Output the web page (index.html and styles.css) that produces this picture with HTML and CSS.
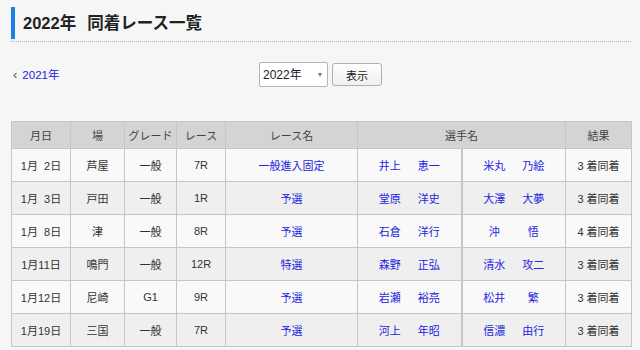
FILE: index.html
```html
<!DOCTYPE html>
<html lang="ja">
  <head>
    <meta charset="UTF-8" />
    <meta name="viewport" content="width=device-width, initial-scale=1.0" />
    <title>2022年 同着レース一覧</title>
    <link rel="stylesheet" href="styles.css">
  </head>
  <body>
    <div class="page">
      <div class="title-wrap">
        <h1>2022年<span class="sub">同着レース一覧</span></h1>
      </div>

      <div class="toolbar">
        <a class="prev" href="#"><span class="chev">&lsaquo;</span>2021年</a>
        <form class="year-form">
          <span class="select-wrap">
            <select name="year">
              <option>2022年</option>
              <option>2021年</option>
              <option>2020年</option>
            </select>
          </span>
          <button type="button">表示</button>
        </form>
        <div></div>
      </div>

      <table class="results">
        <colgroup>
          <col style="width:59px">
          <col style="width:54px">
          <col style="width:52px">
          <col style="width:49px">
          <col style="width:132px">
          <col style="width:104px">
          <col style="width:104px">
          <col style="width:66px">
        </colgroup>
        <thead>
          <tr>
            <th>月日</th>
            <th>場</th>
            <th>グレード</th>
            <th>レース</th>
            <th>レース名</th>
            <th colspan="2">選手名</th>
            <th>結果</th>
          </tr>
        </thead>
        <tbody>
          <tr>
            <td>1月&nbsp;&nbsp;2日</td><td>芦屋</td><td>一般</td><td>7R</td>
            <td><a href="#">一般進入固定</a></td>
            <td class="name"><a href="#"><span>井上</span><span>恵一</span></a></td>
            <td class="name second"><a href="#"><span>米丸</span><span>乃絵</span></a></td>
            <td>3 着同着</td>
          </tr>
          <tr>
            <td>1月&nbsp;&nbsp;3日</td><td>戸田</td><td>一般</td><td>1R</td>
            <td><a href="#">予選</a></td>
            <td class="name"><a href="#"><span>堂原</span><span>洋史</span></a></td>
            <td class="name second"><a href="#"><span>大澤</span><span>大夢</span></a></td>
            <td>3 着同着</td>
          </tr>
          <tr>
            <td>1月&nbsp;&nbsp;8日</td><td>津</td><td>一般</td><td>8R</td>
            <td><a href="#">予選</a></td>
            <td class="name"><a href="#"><span>石倉</span><span>洋行</span></a></td>
            <td class="name second"><a href="#"><span>沖</span><span>悟</span></a></td>
            <td>4 着同着</td>
          </tr>
          <tr>
            <td>1月11日</td><td>鳴門</td><td>一般</td><td>12R</td>
            <td><a href="#">特選</a></td>
            <td class="name"><a href="#"><span>森野</span><span>正弘</span></a></td>
            <td class="name second"><a href="#"><span>清水</span><span>攻二</span></a></td>
            <td>3 着同着</td>
          </tr>
          <tr>
            <td>1月12日</td><td>尼崎</td><td>G1</td><td>9R</td>
            <td><a href="#">予選</a></td>
            <td class="name"><a href="#"><span>岩瀬</span><span>裕亮</span></a></td>
            <td class="name second"><a href="#"><span>松井</span><span>繁</span></a></td>
            <td>3 着同着</td>
          </tr>
          <tr>
            <td>1月19日</td><td>三国</td><td>一般</td><td>7R</td>
            <td><a href="#">予選</a></td>
            <td class="name"><a href="#"><span>河上</span><span>年昭</span></a></td>
            <td class="name second"><a href="#"><span>信濃</span><span>由行</span></a></td>
            <td>3 着同着</td>
          </tr>
        </tbody>
      </table>
    </div>
  </body>
</html>
```

FILE: styles.css
```css
html,
body {
  overflow: hidden;
}
body {
  margin: 0;
  background-color: #f6f6f6;
  color: #333;
  font-family: "Liberation Sans", Arial, "Noto Sans CJK JP", sans-serif;
  font-size: 11px;
}
a {
  color: #2323e0;
  text-decoration: none;
}
.page {
  padding: 7px 9px 0 11px;
}

/* heading with blue bar and dotted rule */
.title-wrap {
  border-bottom: 1px dotted #b0b0b0;
  padding-bottom: 2px;
}
h1 {
  margin: 0;
  height: 32px;
  line-height: 32px;
  border-left: 4px solid #1b7fe3;
  padding-left: 8px;
  font-size: 16.5px;
  font-weight: bold;
  color: #222;
}
h1 .sub {
  margin-left: 11px;
}

/* year selector */
.toolbar {
  display: grid;
  grid-template-columns: 1fr auto 1fr;
  align-items: center;
  margin-top: 20px;
  height: 25px;
}
.prev {
  font-size: 11.5px;
  padding-left: 2px;
  margin-top: -2px;
}
.prev .chev {
  color: #555;
  font-size: 13px;
  margin-right: 5px;
}
.year-form {
  display: flex;
  align-items: center;
  gap: 4px;
  margin-left: -1px;
}
.select-wrap {
  position: relative;
  display: inline-block;
}
.select-wrap::after {
  content: "";
  position: absolute;
  right: 6px;
  top: 11px;
  border-left: 2.5px solid transparent;
  border-right: 2.5px solid transparent;
  border-top: 4px solid #777;
  pointer-events: none;
}
.select-wrap select {
  appearance: none;
  -webkit-appearance: none;
  width: 69px;
  height: 25px;
  box-sizing: border-box;
  border: 1px solid #b4b4b4;
  border-radius: 2px;
  background-color: #fff;
  padding: 0 0 0 3px;
  font-family: inherit;
  font-size: 12px;
  color: #222;
}
.year-form button {
  width: 50px;
  height: 23px;
  box-sizing: border-box;
  border: 1px solid #b0b0b0;
  border-radius: 3px;
  background: linear-gradient(#fdfdfd, #f0f0f0);
  font-family: inherit;
  font-size: 11px;
  color: #222;
  padding: 0;
}

/* results table */
.results {
  margin-top: 34px;
  width: 620px;
  table-layout: fixed;
  border-collapse: collapse;
}
.results th,
.results td {
  border: 1px solid #c6c6c6;
  text-align: center;
  padding: 0;
  white-space: nowrap;
}
.results th {
  height: 26px;
  background-color: #d4d4d4;
  font-weight: normal;
  color: #444;
}
.results td {
  height: 32px;
}
.results tbody tr:nth-child(odd) td {
  background-color: #f9f9f9;
}
.results tbody tr:nth-child(even) td {
  background-color: #efefef;
}
.results td.second {
  border-left-width: 2px;
}
.results td.name span {
  display: inline-block;
  width: 24px;
  text-align: center;
}
.results td.name span + span {
  margin-left: 15px;
}
```
